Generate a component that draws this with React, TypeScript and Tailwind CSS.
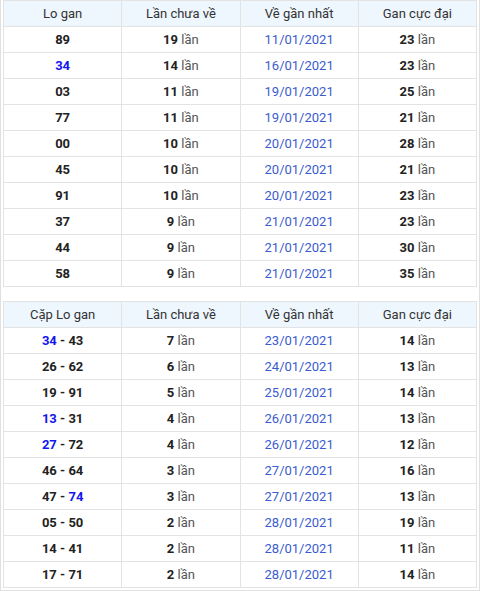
import React from 'react';

type Row = { a: React.ReactNode; b: string; c: string; d: string };

const HL = ({ children }: { children: React.ReactNode }) => (
  <span className="text-[#1515f0]">{children}</span>
);

const TOP: Row[] = [
  { a: '89', b: '19', c: '11/01/2021', d: '23' },
  { a: <HL>34</HL>, b: '14', c: '16/01/2021', d: '23' },
  { a: '03', b: '11', c: '19/01/2021', d: '25' },
  { a: '77', b: '11', c: '19/01/2021', d: '21' },
  { a: '00', b: '10', c: '20/01/2021', d: '28' },
  { a: '45', b: '10', c: '20/01/2021', d: '21' },
  { a: '91', b: '10', c: '20/01/2021', d: '23' },
  { a: '37', b: '9', c: '21/01/2021', d: '23' },
  { a: '44', b: '9', c: '21/01/2021', d: '30' },
  { a: '58', b: '9', c: '21/01/2021', d: '35' },
];

const PAIRS: Row[] = [
  { a: <><HL>34</HL> - 43</>, b: '7', c: '23/01/2021', d: '14' },
  { a: '26 - 62', b: '6', c: '24/01/2021', d: '13' },
  { a: '19 - 91', b: '5', c: '25/01/2021', d: '14' },
  { a: <><HL>13</HL> - 31</>, b: '4', c: '26/01/2021', d: '13' },
  { a: <><HL>27</HL> - 72</>, b: '4', c: '26/01/2021', d: '12' },
  { a: '46 - 64', b: '3', c: '27/01/2021', d: '16' },
  { a: <>47 - <HL>74</HL></>, b: '3', c: '27/01/2021', d: '13' },
  { a: '05 - 50', b: '2', c: '28/01/2021', d: '19' },
  { a: '14 - 41', b: '2', c: '28/01/2021', d: '11' },
  { a: '17 - 71', b: '2', c: '28/01/2021', d: '14' },
];

function Times({ n }: { n: string }) {
  return (
    <>
      <b className="font-bold text-[#222]">{n}</b> <span className="text-[#555]">lần</span>
    </>
  );
}

function GanTable({ first, rows }: { first: string; rows: Row[] }) {
  const th = 'h-[26px] border border-[#e3e3e3] font-normal text-[#333] w-1/4';
  const td = 'h-[26px] border border-[#e3e3e3] text-center p-0';
  return (
    <table className="w-full table-fixed border-collapse text-[13px]">
      <thead>
        <tr className="bg-[#eef6fe]">
          <th className={th}>{first}</th>
          <th className={th}>Lần chưa về</th>
          <th className={th}>Về gần nhất</th>
          <th className={th}>Gan cực đại</th>
        </tr>
      </thead>
      <tbody>
        {rows.map((r, i) => (
          <tr key={i}>
            <td className={`${td} font-bold text-[#222]`}>{r.a}</td>
            <td className={td}><Times n={r.b} /></td>
            <td className={`${td} text-[#3a5ccc]`}>{r.c}</td>
            <td className={td}><Times n={r.d} /></td>
          </tr>
        ))}
      </tbody>
    </table>
  );
}

export default function App() {
  return (
    <div className="w-[480px] h-[591px] bg-white font-['Roboto',sans-serif] border-x border-b border-[#e0e0e0] px-[2px] pb-[3px] overflow-hidden">
      <div className="flex flex-col gap-[14px]">
        <GanTable first="Lo gan" rows={TOP} />
        <GanTable first="Cặp Lo gan" rows={PAIRS} />
      </div>
    </div>
  );
}
